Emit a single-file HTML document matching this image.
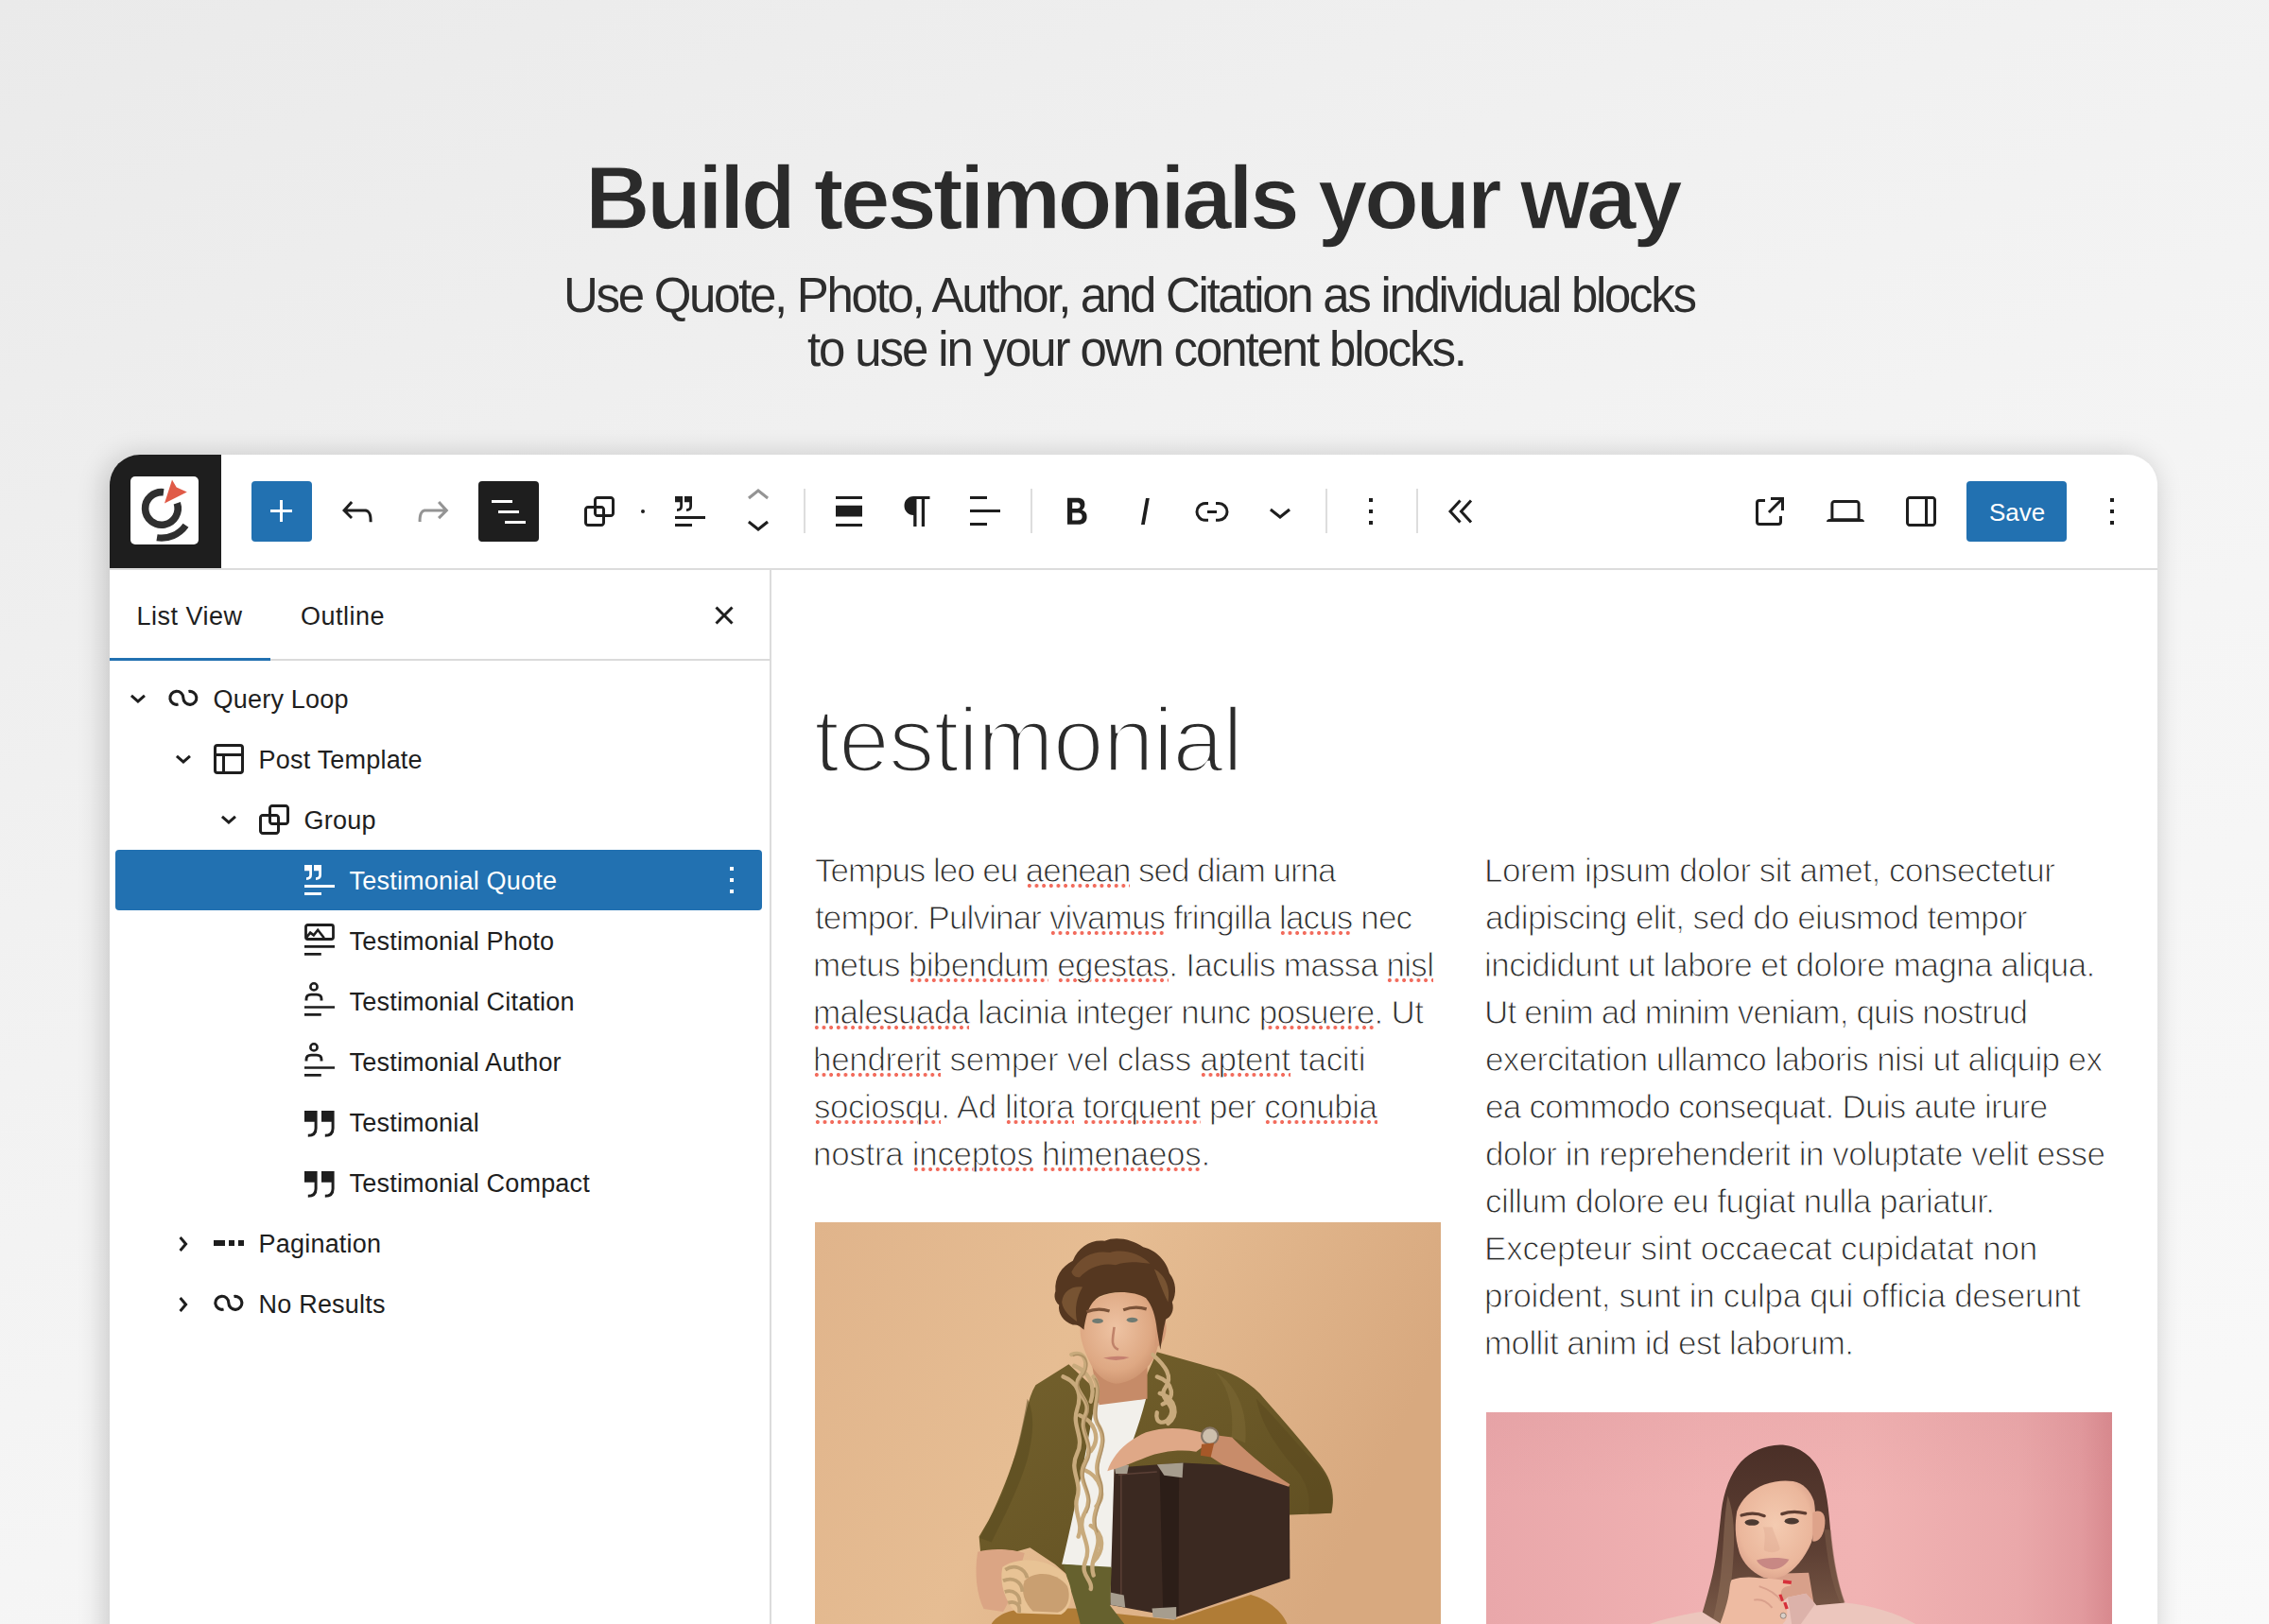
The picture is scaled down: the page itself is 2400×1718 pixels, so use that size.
<!DOCTYPE html><html><head><meta charset="utf-8"><style>
*{margin:0;padding:0;box-sizing:border-box}
html,body{width:2400px;height:1718px;overflow:hidden}
body{position:relative;font-family:"Liberation Sans",sans-serif;background:linear-gradient(156deg,#eaeaea 0%,#f1f1f1 35%,#f5f5f5 60%,#f9f9f9 100%);color:#2d2d2d}
.t{position:absolute;white-space:nowrap}
.r{position:absolute}
.ic{position:absolute;overflow:visible}
#card{position:absolute;left:116px;top:481px;width:2166px;height:1400px;background:#fff;border-radius:32px 32px 0 0;box-shadow:-4px 3px 30px rgba(0,0,0,.2)}
.sp{background-image:radial-gradient(circle at 3.8px 50%,#f26b5c 1.7px,rgba(242,107,92,0) 2.3px);background-repeat:repeat-x;background-size:7.67px 6px;background-position:0 100%;padding-bottom:0px}
svg#ov{position:absolute;left:0;top:0;width:2400px;height:1718px;overflow:visible}
</style></head><body>
<div class="t" style="left:619.00px;top:162.07px;font-size:95px;line-height:95px;color:#2b2b2b;font-weight:bold;letter-spacing:-3.673px;-webkit-text-stroke:1.4px #efefef;">Build testimonials your way</div>
<div class="t" style="left:596.00px;top:286.82px;font-size:51px;line-height:51px;color:#2d2d2d;letter-spacing:-2.302px;">Use Quote, Photo, Author, and Citation as individual blocks</div>
<div class="t" style="left:854.00px;top:343.82px;font-size:51px;line-height:51px;color:#2d2d2d;letter-spacing:-2.129px;">to use in your own content blocks.</div>
<div id="card"></div>
<div class="r" style="left:116px;top:481px;width:118px;height:120px;background:#1e1e1e;border-top-left-radius:32px"></div>
<div class="r" style="left:138px;top:504px;width:72px;height:72px;background:#fff;border-radius:5px"></div>
<svg class="ic" style="left:138px;top:504px;width:72px;height:72px" viewBox="0 0 72 72">
<path d="M49.26 28.27 A17.3 17.3 0 1 1 35.01 16.73" fill="none" stroke="#2f2f2f" stroke-width="7.6"/>
<path d="M58.5 51.8 A31.3 31.3 0 0 1 28 64.8" fill="none" stroke="#2f2f2f" stroke-width="7.2"/>
<path d="M44 3.6 L48.7 11.5 L59.8 16.5 L36 28.5 Z" fill="#e05a47"/>
</svg>
<div class="r" style="left:116px;top:601px;width:2166px;height:2px;background:#dcdcdc;"></div>
<div class="r" style="left:266px;top:509px;width:64px;height:64px;background:#2271b1;border-radius:4px"></div>
<svg class="ic" style="left:274.0px;top:517.0px;width:48px;height:48px" viewBox="0 0 24 24"><path fill="#fff" d="M11 12.5V17.5H12.5V12.5H17.5V11H12.5V6H11V11H6V12.5H11Z"/></svg>
<svg class="ic" style="left:354.0px;top:517.0px;width:48px;height:48px" viewBox="0 0 24 24"><path fill="#1e1e1e" d="M18.3 11.7c-.6-.6-1.4-.9-2.3-.9H6.7l2.9-3.3-1.1-1-4.5 5L8.5 16l1-1-2.7-2.7H16c.5 0 .9.2 1.3.5 1 1 1 3.4 1 4.5v.3h1.5v-.2c0-1.5 0-4.3-1.5-5.7z"/></svg>
<svg class="ic" style="left:434.0px;top:517.0px;width:48px;height:48px" viewBox="0 0 24 24"><path fill="#949494" d="M15.6 6.5l-1.1 1 2.9 3.3H8c-.9 0-1.7.3-2.3.9-1.4 1.5-1.4 4.2-1.4 5.6v.2h1.5v-.3c0-1.1 0-3.5 1-4.5.3-.3.7-.5 1.3-.5h9.2L14.5 15l1.1 1.1 4.6-4.6-4.6-5z"/></svg>
<div class="r" style="left:506px;top:509px;width:64px;height:64px;background:#1e1e1e;border-radius:4px"></div>
<svg class="ic" style="left:514.0px;top:517.0px;width:48px;height:48px" viewBox="0 0 24 24"><path fill="#fff" d="M3 6h11v1.5H3V6Zm3.5 5.5h11V13h-11v-1.5ZM21 17H10v1.5h11V17Z"/></svg>
<svg class="ic" style="left:610.0px;top:517.0px;width:48px;height:48px" viewBox="0 0 24 24"><path fill="#1e1e1e" d="M18 4h-7c-1.1 0-2 .9-2 2v3H6c-1.1 0-2 .9-2 2v7c0 1.1.9 2 2 2h7c1.1 0 2-.9 2-2v-3h3c1.1 0 2-.9 2-2V6c0-1.1-.9-2-2-2zm-4.5 14c0 .3-.2.5-.5.5H6c-.3 0-.5-.2-.5-.5v-7c0-.3.2-.5.5-.5h3V13c0 1.1.9 2 2 2h2.5v3zm0-4.5H11c-.3 0-.5-.2-.5-.5v-2.5H13c.3 0 .5.2.5.5v2.5zm5-.5c0 .3-.2.5-.5.5h-3V11c0-1.1-.9-2-2-2h-2.5V6c0-.3.2-.5.5-.5h7c.3 0 .5.2.5.5v7z"/></svg>
<div class="r" style="left:678px;top:539px;width:4px;height:4px;background:#1e1e1e;border-radius:2px"></div>
<svg class="ic" style="left:706.0px;top:517.0px;width:48px;height:48px" viewBox="0 0 24 24"><path fill="#1e1e1e" d="M4 4H8V9.3Q8 12 5 12V10.6Q6.6 10.6 6.6 9.3V7.1H4ZM9 4H13V9.3Q13 12 10 12V10.6Q11.6 10.6 11.6 9.3V7.1H9ZM4 14.5h16V16H4zM4 18.5h9V20H4z"/></svg>
<svg class="ic" style="left:778.0px;top:501.0px;width:48px;height:48px" viewBox="0 0 24 24"><path fill="#949494" d="M6.5 12.4L12 8l5.5 4.4-.9 1.2L12 10l-4.5 3.6-1-1.2z"/></svg>
<svg class="ic" style="left:778.0px;top:530.0px;width:48px;height:48px" viewBox="0 0 24 24"><path fill="#1e1e1e" d="M17.5 11.6L12 16l-5.5-4.4.9-1.2L12 14l4.5-3.6 1 1.2z"/></svg>
<div class="r" style="left:850px;top:517px;width:2px;height:47px;background:#dddddd;"></div>
<div class="r" style="left:1090px;top:517px;width:2px;height:47px;background:#dddddd;"></div>
<div class="r" style="left:1402px;top:517px;width:2px;height:47px;background:#dddddd;"></div>
<div class="r" style="left:1498px;top:517px;width:2px;height:47px;background:#dddddd;"></div>
<svg class="ic" style="left:874.0px;top:517.0px;width:48px;height:48px" viewBox="0 0 24 24"><path fill="#1e1e1e" d="M5 4h14v1.5H5zM5 8.85h14v5.95H5zM5 18.5h14V20H5z"/></svg>
<svg class="ic" style="left:945.5px;top:517.0px;width:48px;height:48px" viewBox="0 0 24 24"><path fill="#1e1e1e" d="M10.1 4H18.75V5.5H16.05V20H14.4V5.5H11.75V20H10.1V14C7.3 14 5.25 11.8 5.25 9C5.25 6.2 7.3 4 10.1 4Z"/></svg>
<svg class="ic" style="left:1018.0px;top:517.0px;width:48px;height:48px" viewBox="0 0 24 24"><path fill="#1e1e1e" d="M13 5.5H4V4h9v1.5Zm7 7H4V11h16v1.5Zm-7 7H4V18h9v1.5Z"/></svg>
<svg class="ic" style="left:1114.5px;top:517.0px;width:48px;height:48px" viewBox="0 0 24 24"><path fill="#1e1e1e" d="M14.7 11.3c1-.6 1.5-1.6 1.5-3 0-2.3-1.3-3.4-4-3.4H7v14h5.8c1.4 0 2.5-.3 3.3-1 .8-.7 1.2-1.7 1.2-2.9.1-1.9-.8-3.1-2.6-3.7zm-5.1-4h2.3c.6 0 1.1.1 1.4.4.3.3.5.7.5 1.2s-.2 1-.5 1.2c-.3.3-.8.4-1.4.4H9.6V7.3zm4.6 9c-.4.3-1 .4-1.7.4H9.6v-3.9h2.9c.7 0 1.3.2 1.7.5.4.3.6.8.6 1.5s-.2 1.2-.6 1.5z"/></svg>
<svg class="ic" style="left:1186.5px;top:517.0px;width:48px;height:48px" viewBox="0 0 24 24"><path fill="#1e1e1e" d="M12.5 5L10 19h1.9l2.5-14z"/></svg>
<svg class="ic" style="left:1257.5px;top:517.0px;width:48px;height:48px" viewBox="0 0 24 24"><path fill="#1e1e1e" d="M10 17.389H8.444A5.194 5.194 0 1 1 8.444 7H10v1.5H8.444a3.694 3.694 0 0 0 0 7.389H10v1.5ZM14 7h1.556a5.194 5.194 0 0 1 0 10.39H14v-1.5h1.556a3.694 3.694 0 0 0 0-7.39H14V7Zm-4.5 6h5v-1.5h-5V13Z"/></svg>
<svg class="ic" style="left:1330.0px;top:517.0px;width:48px;height:48px" viewBox="0 0 24 24"><path fill="#1e1e1e" d="M17.5 11.6L12 16l-5.5-4.4.9-1.2L12 14l4.5-3.6 1 1.2z"/></svg>
<svg class="ic" style="left:1426.0px;top:517.0px;width:48px;height:48px" viewBox="0 0 24 24"><path fill="#1e1e1e" d="M13 19h-2v-2h2v2zm0-6h-2v-2h2v2zm0-6h-2V5h2v2z"/></svg>
<svg class="ic" style="left:1848.0px;top:517.0px;width:48px;height:48px" viewBox="0 0 24 24"><path fill="#1e1e1e" d="M19.5 4.5h-7V6h4.44l-5.97 5.97 1.06 1.06L18 7.06v4.44h1.5v-7Zm-13 1a2 2 0 0 0-2 2v10a2 2 0 0 0 2 2h10a2 2 0 0 0 2-2v-3H17v3a.5.5 0 0 1-.5.5h-10a.5.5 0 0 1-.5-.5v-10a.5.5 0 0 1 .5-.5h3V5.5h-3Z"/></svg>
<svg class="ic" style="left:1928.0px;top:517.0px;width:48px;height:48px" viewBox="0 0 24 24"><path fill="#1e1e1e" d="M20.5 16h-.7V8c0-1.1-.9-2-2-2H6.2c-1.1 0-2 .9-2 2v8h-.7c-.8 0-1.5.7-1.5 1.5h20c0-.8-.7-1.5-1.5-1.5zM5.7 8c0-.3.2-.5.5-.5h11.6c.3 0 .5.2.5.5v7.6H5.7V8z"/></svg>
<svg class="ic" style="left:2008.0px;top:517.0px;width:48px;height:48px" viewBox="0 0 24 24"><path fill="#1e1e1e" d="M18 4H6c-1.1 0-2 .9-2 2v12c0 1.1.9 2 2 2h12c1.1 0 2-.9 2-2V6c0-1.1-.9-2-2-2zm-4 14.5H6c-.3 0-.5-.2-.5-.5V6c0-.3.2-.5.5-.5h8v13zm4.5-.5c0 .3-.2.5-.5.5h-2.5v-13H18c.3 0 .5.2.5.5v12z"/></svg>
<div class="r" style="left:2080px;top:509px;width:106px;height:64px;background:#2271b1;border-radius:4px"></div>
<div class="t" style="left:2104.00px;top:528.99px;font-size:26px;line-height:26px;color:#fff;letter-spacing:0.000px;">Save</div>
<svg class="ic" style="left:2210.0px;top:517.0px;width:48px;height:48px" viewBox="0 0 24 24"><path fill="#1e1e1e" d="M13 19h-2v-2h2v2zm0-6h-2v-2h2v2zm0-6h-2V5h2v2z"/></svg>
<div class="r" style="left:814px;top:603px;width:2px;height:1200px;background:#dcdcdc;"></div>
<div class="t" style="left:144.50px;top:639.14px;font-size:27px;line-height:27px;color:#1e1e1e;letter-spacing:0.500px;">List View</div>
<div class="t" style="left:318.00px;top:639.14px;font-size:27px;line-height:27px;color:#1e1e1e;letter-spacing:0.500px;">Outline</div>
<svg class="ic" style="left:742.0px;top:626.5px;width:48px;height:48px" viewBox="0 0 24 24"><path fill="#1e1e1e" d="M12 13.06l3.712 3.713 1.061-1.06L13.061 12l3.712-3.712-1.06-1.06L12 10.938 8.288 7.227l-1.061 1.06L10.939 12l-3.712 3.712 1.06 1.061L12 13.061z"/></svg>
<div class="r" style="left:116px;top:697px;width:699px;height:2px;background:#dadada;"></div>
<div class="r" style="left:116px;top:696px;width:170px;height:3px;background:#2271b1;"></div>
<div class="r" style="left:122px;top:899px;width:684px;height:64px;background:#2271b1;border-radius:4px"></div>
<svg class="ic" style="left:122.0px;top:717.0px;width:48px;height:48px" viewBox="0 0 24 24"><path fill="#1e1e1e" d="M15.9599 10.0375L11.9719 13.4558L7.98383 10.0375L8.96003 8.89856L11.9719 11.4802L14.9838 8.89856L15.9599 10.0375Z"/></svg>
<div class="t" style="left:225.60px;top:727.14px;font-size:27px;line-height:27px;color:#1e1e1e;letter-spacing:0.200px;">Query Loop</div>
<svg class="ic" style="left:170.0px;top:781.0px;width:48px;height:48px" viewBox="0 0 24 24"><path fill="#1e1e1e" d="M15.9599 10.0375L11.9719 13.4558L7.98383 10.0375L8.96003 8.89856L11.9719 11.4802L14.9838 8.89856L15.9599 10.0375Z"/></svg>
<svg class="ic" style="left:218.0px;top:779.0px;width:48px;height:48px" viewBox="0 0 24 24"><path fill="#1e1e1e" d="M18 5.5H6a.5.5 0 0 0-.5.5v3h13V6a.5.5 0 0 0-.5-.5Zm.5 5H10v8h8a.5.5 0 0 0 .5-.5v-7.5Zm-10 0h-3V18a.5.5 0 0 0 .5.5h2.5v-8ZM6 4h12a2 2 0 0 1 2 2v12a2 2 0 0 1-2 2H6a2 2 0 0 1-2-2V6a2 2 0 0 1 2-2Z"/></svg>
<div class="t" style="left:273.60px;top:791.14px;font-size:27px;line-height:27px;color:#1e1e1e;letter-spacing:0.200px;">Post Template</div>
<svg class="ic" style="left:218.0px;top:845.0px;width:48px;height:48px" viewBox="0 0 24 24"><path fill="#1e1e1e" d="M15.9599 10.0375L11.9719 13.4558L7.98383 10.0375L8.96003 8.89856L11.9719 11.4802L14.9838 8.89856L15.9599 10.0375Z"/></svg>
<svg class="ic" style="left:266.0px;top:843.0px;width:48px;height:48px" viewBox="0 0 24 24"><path fill="#1e1e1e" d="M18 4h-7c-1.1 0-2 .9-2 2v3H6c-1.1 0-2 .9-2 2v7c0 1.1.9 2 2 2h7c1.1 0 2-.9 2-2v-3h3c1.1 0 2-.9 2-2V6c0-1.1-.9-2-2-2zm-4.5 14c0 .3-.2.5-.5.5H6c-.3 0-.5-.2-.5-.5v-7c0-.3.2-.5.5-.5h3V13c0 1.1.9 2 2 2h2.5v3zm0-4.5H11c-.3 0-.5-.2-.5-.5v-2.5H13c.3 0 .5.2.5.5v2.5zm5-.5c0 .3-.2.5-.5.5h-3V11c0-1.1-.9-2-2-2h-2.5V6c0-.3.2-.5.5-.5h7c.3 0 .5.2.5.5v7z"/></svg>
<div class="t" style="left:321.60px;top:855.14px;font-size:27px;line-height:27px;color:#1e1e1e;letter-spacing:0.200px;">Group</div>
<svg class="ic" style="left:314.0px;top:907.0px;width:48px;height:48px" viewBox="0 0 24 24"><path fill="#fff" d="M4 4H8V9.3Q8 12 5 12V10.6Q6.6 10.6 6.6 9.3V7.1H4ZM9 4H13V9.3Q13 12 10 12V10.6Q11.6 10.6 11.6 9.3V7.1H9ZM4 14.5h16V16H4zM4 18.5h9V20H4z"/></svg>
<div class="t" style="left:369.60px;top:919.14px;font-size:27px;line-height:27px;color:#fff;letter-spacing:0.200px;">Testimonial Quote</div>
<div class="t" style="left:369.60px;top:983.14px;font-size:27px;line-height:27px;color:#1e1e1e;letter-spacing:0.200px;">Testimonial Photo</div>
<div class="t" style="left:369.60px;top:1047.14px;font-size:27px;line-height:27px;color:#1e1e1e;letter-spacing:0.200px;">Testimonial Citation</div>
<div class="t" style="left:369.60px;top:1111.14px;font-size:27px;line-height:27px;color:#1e1e1e;letter-spacing:0.200px;">Testimonial Author</div>
<svg class="ic" style="left:314.0px;top:1163.0px;width:48px;height:48px" viewBox="0 0 24 24"><path fill="#1e1e1e" d="M4 6H10.8V15.2Q10.8 19.9 5.9 19.9V18.4Q9.3 18.4 9.3 15.2V11.9H4ZM13 6H19.8V15.2Q19.8 19.9 14.9 19.9V18.4Q18.3 18.4 18.3 15.2V11.9H13Z"/></svg>
<div class="t" style="left:369.60px;top:1175.14px;font-size:27px;line-height:27px;color:#1e1e1e;letter-spacing:0.200px;">Testimonial</div>
<svg class="ic" style="left:314.0px;top:1227.0px;width:48px;height:48px" viewBox="0 0 24 24"><path fill="#1e1e1e" d="M4 6H10.8V15.2Q10.8 19.9 5.9 19.9V18.4Q9.3 18.4 9.3 15.2V11.9H4ZM13 6H19.8V15.2Q19.8 19.9 14.9 19.9V18.4Q18.3 18.4 18.3 15.2V11.9H13Z"/></svg>
<div class="t" style="left:369.60px;top:1239.14px;font-size:27px;line-height:27px;color:#1e1e1e;letter-spacing:0.200px;">Testimonial Compact</div>
<svg class="ic" style="left:170.0px;top:1291.5px;width:48px;height:48px" viewBox="0 0 24 24"><path fill="#1e1e1e" d="M10.8622 8.04053L14.2805 12.0286L10.8622 16.0167L9.72327 15.0405L12.3049 12.0286L9.72327 9.01672L10.8622 8.04053Z"/></svg>
<div class="r" style="left:226px;top:1312px;width:12px;height:6px;background:#1e1e1e;"></div>
<div class="r" style="left:242px;top:1312px;width:6px;height:6px;background:#1e1e1e;"></div>
<div class="r" style="left:252px;top:1312px;width:6px;height:6px;background:#1e1e1e;"></div>
<div class="t" style="left:273.60px;top:1303.14px;font-size:27px;line-height:27px;color:#1e1e1e;letter-spacing:0.200px;">Pagination</div>
<svg class="ic" style="left:170.0px;top:1355.5px;width:48px;height:48px" viewBox="0 0 24 24"><path fill="#1e1e1e" d="M10.8622 8.04053L14.2805 12.0286L10.8622 16.0167L9.72327 15.0405L12.3049 12.0286L9.72327 9.01672L10.8622 8.04053Z"/></svg>
<div class="t" style="left:273.60px;top:1367.14px;font-size:27px;line-height:27px;color:#1e1e1e;letter-spacing:0.200px;">No Results</div>
<svg class="ic" style="left:750.0px;top:907.0px;width:48px;height:48px" viewBox="0 0 24 24"><path fill="#fff" d="M13 19h-2v-2h2v2zm0-6h-2v-2h2v2zm0-6h-2V5h2v2z"/></svg>
<div class="t" style="left:861.00px;top:733.87px;font-size:97px;line-height:97px;color:#2b2b2b;letter-spacing:-0.975px;-webkit-text-stroke:3.5px #fff;">testimonial</div>
<div class="t" style="left:862.00px;top:903.37px;font-size:35px;line-height:35px;color:#2a2a2a;letter-spacing:-1.038px;-webkit-text-stroke:1px #fff;">Tempus leo eu <span class="sp">aenean</span> sed diam urna</div>
<div class="t" style="left:862.00px;top:953.37px;font-size:35px;line-height:35px;color:#2a2a2a;letter-spacing:-0.864px;-webkit-text-stroke:1px #fff;">tempor. Pulvinar <span class="sp">vivamus</span> fringilla <span class="sp">lacus</span> nec</div>
<div class="t" style="left:860.00px;top:1003.37px;font-size:35px;line-height:35px;color:#2a2a2a;letter-spacing:-0.679px;-webkit-text-stroke:1px #fff;">metus <span class="sp">bibendum</span> <span class="sp">egestas</span>. Iaculis massa <span class="sp">nisl</span></div>
<div class="t" style="left:860.00px;top:1053.37px;font-size:35px;line-height:35px;color:#2a2a2a;letter-spacing:-0.665px;-webkit-text-stroke:1px #fff;"><span class="sp">malesuada</span> lacinia integer nunc <span class="sp">posuere</span>. Ut</div>
<div class="t" style="left:860.00px;top:1103.37px;font-size:35px;line-height:35px;color:#2a2a2a;letter-spacing:-0.329px;-webkit-text-stroke:1px #fff;"><span class="sp">hendrerit</span> semper vel class <span class="sp">aptent</span> taciti</div>
<div class="t" style="left:861.00px;top:1153.37px;font-size:35px;line-height:35px;color:#2a2a2a;letter-spacing:-0.483px;-webkit-text-stroke:1px #fff;"><span class="sp">sociosqu</span>. Ad <span class="sp">litora</span> <span class="sp">torquent</span> per <span class="sp">conubia</span></div>
<div class="t" style="left:860.00px;top:1203.37px;font-size:35px;line-height:35px;color:#2a2a2a;letter-spacing:-0.316px;-webkit-text-stroke:1px #fff;">nostra <span class="sp">inceptos</span> <span class="sp">himenaeos</span>.</div>
<div class="t" style="left:1570.00px;top:903.37px;font-size:35px;line-height:35px;color:#2a2a2a;letter-spacing:-0.487px;-webkit-text-stroke:1px #fff;">Lorem ipsum dolor sit amet, consectetur</div>
<div class="t" style="left:1571.00px;top:953.37px;font-size:35px;line-height:35px;color:#2a2a2a;letter-spacing:-0.591px;-webkit-text-stroke:1px #fff;">adipiscing elit, sed do eiusmod tempor</div>
<div class="t" style="left:1570.00px;top:1003.37px;font-size:35px;line-height:35px;color:#2a2a2a;letter-spacing:-0.536px;-webkit-text-stroke:1px #fff;">incididunt ut labore et dolore magna aliqua.</div>
<div class="t" style="left:1570.00px;top:1053.37px;font-size:35px;line-height:35px;color:#2a2a2a;letter-spacing:-0.833px;-webkit-text-stroke:1px #fff;">Ut enim ad minim veniam, quis nostrud</div>
<div class="t" style="left:1571.00px;top:1103.37px;font-size:35px;line-height:35px;color:#2a2a2a;letter-spacing:-0.609px;-webkit-text-stroke:1px #fff;">exercitation ullamco laboris nisi ut aliquip ex</div>
<div class="t" style="left:1571.00px;top:1153.37px;font-size:35px;line-height:35px;color:#2a2a2a;letter-spacing:-0.708px;-webkit-text-stroke:1px #fff;">ea commodo consequat. Duis aute irure</div>
<div class="t" style="left:1571.00px;top:1203.37px;font-size:35px;line-height:35px;color:#2a2a2a;letter-spacing:-0.467px;-webkit-text-stroke:1px #fff;">dolor in reprehenderit in voluptate velit esse</div>
<div class="t" style="left:1571.00px;top:1253.37px;font-size:35px;line-height:35px;color:#2a2a2a;letter-spacing:-0.559px;-webkit-text-stroke:1px #fff;">cillum dolore eu fugiat nulla pariatur.</div>
<div class="t" style="left:1570.00px;top:1303.37px;font-size:35px;line-height:35px;color:#2a2a2a;letter-spacing:-0.175px;-webkit-text-stroke:1px #fff;">Excepteur sint occaecat cupidatat non</div>
<div class="t" style="left:1570.00px;top:1353.37px;font-size:35px;line-height:35px;color:#2a2a2a;letter-spacing:-0.331px;-webkit-text-stroke:1px #fff;">proident, sunt in culpa qui officia deserunt</div>
<div class="t" style="left:1570.00px;top:1403.37px;font-size:35px;line-height:35px;color:#2a2a2a;letter-spacing:-0.596px;-webkit-text-stroke:1px #fff;">mollit anim id est laborum.</div>
<svg class="r" style="left:862px;top:1293px;width:662px;height:425px" viewBox="862 1293 662 425">
<defs>
<linearGradient id="mbg" x1="0" y1="0" x2="1" y2=".3"><stop offset="0" stop-color="#e0b48b"/><stop offset=".45" stop-color="#e6bd93"/><stop offset="1" stop-color="#d8a97f"/></linearGradient>
<radialGradient id="mface" cx=".45" cy=".4" r=".65"><stop offset="0" stop-color="#eec3a3"/><stop offset=".7" stop-color="#dea883"/><stop offset="1" stop-color="#c98f6b"/></radialGradient>
<linearGradient id="mjack" x1="0" y1="0" x2="1" y2="1"><stop offset="0" stop-color="#74612d"/><stop offset=".5" stop-color="#6a5827"/><stop offset="1" stop-color="#5d4c20"/></linearGradient>
</defs>
<rect x="862" y="1293" width="662" height="425" fill="url(#mbg)"/>
<g transform="translate(862,1293) scale(0.29176)">
<path fill="url(#mjack)" d="M920,515 L800,590 C770,640 760,720 740,800 C710,900 670,1000 630,1080 L595,1140 L600,1195 L710,1200 L780,1180 L870,1240 L940,1300 L1080,1300 L1080,890 L1700,1062 L1872,1055 C1888,990 1872,930 1832,880 C1762,790 1682,700 1612,620 C1562,570 1502,540 1452,530 L1240,470 L1200,560 L1010,600 Z"/>
<path fill="#5a4a1f" opacity=".55" d="M770,640 C750,760 720,880 680,980 C650,1050 620,1100 598,1145 L640,1160 C690,1060 740,960 770,860 C790,780 800,700 770,640Z"/>
<path fill="#5a481e" opacity=".5" d="M1600,640 C1680,720 1760,820 1830,890 C1870,940 1880,1000 1872,1055 L1790,1058 C1800,990 1780,930 1730,880 C1680,820 1620,740 1600,640Z"/>
<path fill="#7d6a36" opacity=".5" d="M1450,540 C1500,600 1520,680 1510,780 L1560,800 C1570,700 1540,600 1450,540Z"/>
<path fill="#f2f0eb" d="M1015,655 L1200,640 C1180,720 1150,800 1120,880 L1085,890 L1080,1255 L895,1240 C930,1100 970,900 1015,655 Z"/>
<path fill="#c68b68" d="M1005,520 L1205,520 L1205,640 L1030,662 Z"/>
<path fill="url(#mface)" d="M962,372 C968,320 990,285 1060,262 C1130,245 1190,250 1215,290 C1238,330 1248,380 1246,420 C1244,470 1225,510 1190,540 C1160,570 1120,585 1090,585 C1050,580 1015,550 995,505 C975,460 958,420 962,372 Z"/>
<path fill="#d49b78" d="M1238,350 C1262,335 1280,360 1272,400 C1265,440 1245,455 1232,450 Z"/>
<path fill="#553720" d="M872,250 C868,200 895,160 935,140 C955,90 1000,62 1050,68 C1090,50 1150,62 1190,90 C1235,100 1275,140 1285,185 C1310,215 1312,260 1295,290 C1305,320 1290,345 1272,352 C1262,390 1258,430 1252,462 L1240,390 C1235,340 1222,300 1200,275 C1160,250 1080,245 1030,270 C1000,290 985,320 975,390 C960,375 950,370 935,372 C900,360 880,330 885,300 C868,285 866,265 872,250 Z"/>
<path fill="#7c5533" opacity=".75" d="M930,180 C960,120 1020,100 1070,110 C1120,95 1180,115 1215,150 C1170,145 1130,140 1090,155 C1040,145 990,165 960,200 C945,200 935,195 930,180Z"/>
<path fill="#86603a" opacity=".7" d="M895,290 C900,250 930,230 970,235 C950,270 940,310 950,360 C920,340 900,320 895,290Z M1230,170 C1270,190 1290,240 1280,290 C1265,260 1250,220 1230,170Z"/>
<path fill="none" stroke="#7a5238" stroke-width="11" d="M985,325 Q1025,308 1068,322 M1118,318 Q1160,302 1202,315"/>
<ellipse cx="1025" cy="358" rx="20" ry="9" fill="#6f7a72"/><ellipse cx="1150" cy="354" rx="20" ry="9" fill="#6f7a72"/>
<path fill="none" stroke="#c0836a" stroke-width="9" d="M1085,380 C1080,420 1070,450 1100,462"/>
<path fill="#c58070" d="M1045,492 Q1095,480 1140,490 Q1095,510 1045,492Z"/>
<path fill="#c88c6a" d="M1440,770 L1512,780 C1562,830 1642,900 1722,950 L1712,968 C1622,952 1542,922 1482,882 L1422,842 Z"/>
<path fill="#3b2921" d="M1085,890 L1330,872 L1480,880 L1720,960 L1722,1292 L1310,1432 L1070,1387 Z"/>
<path fill="#2c1e18" d="M1250,900 L1320,892 L1318,1425 L1262,1412 Z"/>
<path fill="none" stroke="#5b4036" stroke-width="5" d="M1110,905 L1110,1370 M1100,915 L1240,905"/>
<path fill="#a69d8e" d="M1240,878 L1335,872 L1332,926 L1266,918 Z"/>
<path fill="#a69d8e" d="M1085,882 L1138,880 L1132,912 L1090,912 Z"/>
<path fill="#a69d8e" d="M1070,1342 L1120,1352 L1125,1397 L1072,1387 Z"/>
<path fill="#a69d8e" d="M1222,1400 L1310,1395 L1310,1440 L1226,1432 Z"/>
<path fill="#dfa887" d="M1060,902 C1080,842 1130,792 1200,762 C1260,742 1330,742 1400,762 L1422,802 L1382,832 C1322,822 1252,832 1202,852 C1152,872 1102,892 1060,902 Z"/>
<circle cx="1432" cy="775" r="30" fill="#cdbfac" stroke="#857565" stroke-width="7"/>
<path fill="#a65828" d="M1402,805 L1447,800 L1435,852 L1398,846 Z"/>
<path fill="#b07c36" d="M640,1457 C660,1420 720,1400 780,1400 L940,1400 L1100,1420 L1300,1442 L1580,1350 C1650,1370 1700,1420 1712,1457 Z"/>
<path fill="#66612e" d="M900,1240 L1075,1250 L1070,1390 L1122,1457 L962,1457 C950,1400 922,1320 900,1240 Z"/>
<path fill="#dba584" d="M590,1195 C640,1180 720,1185 760,1200 L742,1262 C722,1332 702,1382 682,1412 L612,1402 C587,1352 577,1272 590,1195 Z"/>
<path fill="#e8c395" d="M680,1250 C740,1210 840,1220 900,1270 C942,1320 937,1400 892,1422 L732,1417 C692,1382 667,1312 680,1250 Z"/>
<path fill="#c99f71" d="M760,1300 C800,1260 880,1270 915,1320 C930,1360 915,1405 880,1415 L790,1410 C760,1380 745,1340 760,1300Z"/>
<g fill="none" stroke="#bf9f72" stroke-width="13"><path d="M690,1260 C720,1240 760,1250 770,1290 M682,1300 C715,1285 750,1300 752,1340 M688,1340 C720,1330 745,1350 742,1385 M700,1380 C730,1370 745,1390 740,1415"/></g>
<g fill="none" stroke="#c8aa7c" stroke-width="15" stroke-linecap="round">
<path d="M930,480 C980,460 1000,520 960,560 C920,610 1010,640 980,700 C950,760 1020,800 980,870 C940,940 1020,980 980,1050 C940,1120 1010,1160 980,1230 C960,1280 1010,1300 1000,1330"/>
<path d="M1010,560 C1050,620 990,680 1030,740 C1070,810 1000,860 1030,930 C1060,1000 990,1050 1020,1120 C1045,1180 990,1220 1010,1280"/>
<path d="M900,560 C950,580 970,620 950,680 C930,740 980,780 950,840 C920,900 970,940 950,1000 C935,1050 975,1090 955,1140"/>
<path d="M940,520 C990,540 1020,590 1000,650 M960,700 C1010,720 1040,780 1000,830 M980,900 C1030,920 1060,990 1020,1030 M1000,1100 C1050,1130 1050,1190 1010,1230"/>
<path d="M1225,480 C1270,520 1300,560 1270,600 C1240,640 1310,660 1290,700 C1270,740 1230,730 1240,690 M1240,560 C1300,580 1310,640 1260,660 M1250,620 C1310,640 1320,700 1280,730"/>
</g>
<g fill="none" stroke="#a3855a" stroke-width="5" opacity=".7">
<path d="M935,485 C985,465 1005,525 965,565 C925,615 1015,645 985,705 C955,765 1025,805 985,875 C945,945 1025,985 985,1055"/>
<path d="M1015,565 C1055,625 995,685 1035,745 C1075,815 1005,865 1035,935 C1065,1005 995,1055 1025,1125"/>
</g>
</g>
</svg>
<svg class="r" style="left:1572px;top:1494px;width:662px;height:224px" viewBox="1572 1494 662 224">
<defs>
<linearGradient id="wbg" x1="0" y1="0" x2="1" y2="0"><stop offset="0" stop-color="#e9a7aa"/><stop offset=".35" stop-color="#f0b1b2"/><stop offset=".6" stop-color="#f1b3b3"/><stop offset=".85" stop-color="#eaa8aa"/><stop offset=".95" stop-color="#e29a9e"/><stop offset="1" stop-color="#d8898e"/></linearGradient>
<linearGradient id="wtop" x1="0" y1="0" x2="0" y2="1"><stop offset="0" stop-color="#c87a80" stop-opacity=".10"/><stop offset=".4" stop-color="#c87a80" stop-opacity="0"/></linearGradient>
<radialGradient id="wface" cx=".5" cy=".45" r=".6"><stop offset="0" stop-color="#f4cbb1"/><stop offset=".75" stop-color="#ebb79c"/><stop offset="1" stop-color="#d9a08a"/></radialGradient>
<linearGradient id="whair" x1="0" y1="0" x2="0" y2="1"><stop offset="0" stop-color="#4a2f27"/><stop offset=".6" stop-color="#5e4034"/><stop offset="1" stop-color="#7a5a48"/></linearGradient>
</defs>
<rect x="1572" y="1494" width="662" height="224" fill="url(#wbg)"/>
<rect x="1572" y="1494" width="662" height="224" fill="url(#wtop)"/>
<g transform="translate(1800,1494) scale(0.13793)">
<path fill="url(#whair)" d="M600,250 C480,255 380,300 300,380 C220,470 170,600 150,760 C130,950 110,1150 70,1300 C40,1420 10,1520 -20,1624 L1110,1624 C1110,1560 1100,1500 1090,1450 C1040,1300 1010,1150 990,950 C975,750 960,580 900,440 C840,320 720,250 600,250 Z"/>
<path fill="#8a6a55" opacity=".65" d="M200,640 C170,800 170,1000 150,1200 C140,1350 110,1480 80,1624 L170,1624 C200,1480 230,1320 240,1150 C255,950 250,780 200,640Z"/>
<path fill="#80604c" opacity=".5" d="M940,900 C960,1100 990,1300 1060,1460 L1100,1460 C1040,1300 1010,1100 990,900Z"/>
<path fill="#d8a08a" d="M510,1240 L820,1230 L860,1470 L550,1480 Z"/>
<path fill="url(#wface)" d="M270,760 C255,850 250,950 290,1080 C320,1160 380,1220 460,1262 C510,1285 560,1282 630,1255 C710,1210 790,1120 840,1000 C870,900 880,780 860,680 C830,600 780,545 700,530 C640,522 560,525 480,555 C380,595 300,670 270,760 Z"/>
<path fill="#dea38a" d="M850,770 C900,740 950,760 945,850 C940,940 900,1000 850,990 Z"/>
<path fill="none" stroke="#5e3e32" stroke-width="24" stroke-linecap="round" d="M305,790 Q400,760 480,795 M615,780 Q700,750 795,775"/>
<ellipse cx="385" cy="845" rx="55" ry="24" fill="#4c3a32"/>
<ellipse cx="690" cy="835" rx="55" ry="24" fill="#4c3a32"/>
<path fill="#d9a28c" opacity=".35" d="M470,880 C500,950 470,1030 480,1060 C520,1080 580,1080 600,1050 C590,1000 560,940 540,880Z"/>
<path fill="#c88884" d="M420,1135 C480,1115 600,1110 670,1130 C640,1180 590,1205 540,1205 C490,1200 440,1175 420,1135 Z"/>
<path fill="#ecc6bd" d="M-400,1624 C-250,1575 -80,1540 0,1530 L150,1624 Z M560,1500 L660,1420 L800,1390 L880,1480 L1100,1460 C1300,1480 1500,1540 1640,1624 L480,1624 Z"/>
<path fill="#dcb2aa" d="M660,1420 L800,1390 L870,1470 L760,1624 L690,1624 Z"/>
<path fill="#eebba2" d="M230,1285 C300,1260 380,1262 440,1270 C520,1272 610,1282 690,1300 L680,1330 C620,1335 590,1370 620,1430 C660,1490 665,1560 640,1600 L620,1624 L140,1624 C170,1550 200,1450 210,1380 C215,1330 220,1300 230,1285 Z"/><path fill="none" stroke="#d9a08c" stroke-width="14" d="M440,1335 C520,1360 580,1400 610,1450 M400,1440 C450,1430 500,1450 540,1500"/>
<path fill="#d6303a" d="M625,1285 L690,1295 L685,1320 L622,1312 Z M590,1400 L612,1395 L630,1445 L610,1452 Z M625,1460 L648,1455 L665,1505 L642,1512 Z"/>
<circle cx="625" cy="1560" r="22" fill="#d8cfc8" stroke="#8a7a70" stroke-width="6"/>
</g>
</svg>
<svg id="ov" viewBox="0 0 2400 1718"><path d="M1544.5 529.5L1534 541L1544.5 552.5M1556 529.5L1545.5 541L1556 552.5" fill="none" stroke="#1e1e1e" stroke-width="3"/><path d="M188.55 745.0999999999999 A7 7 0 1 1 193.85 738.3 A7 7 0 1 0 199.45 731.5" fill="none" stroke="#1e1e1e" stroke-width="3.1"/><g transform="translate(314,971) scale(2)"><rect x="4.75" y="3.75" width="14.5" height="7.5" rx="1" fill="none" stroke="#1e1e1e" stroke-width="1.4"/><path d="M5.2 10.2L7.1 7.8L8.9 9.2L11.1 6.4L14.4 10.6" fill="none" stroke="#1e1e1e" stroke-width="1.3"/><path d="M4 14.5h16v1.4H4zM4 18.5h8.9v1.4H4z" fill="#1e1e1e"/></g><g transform="translate(314,1035) scale(2)"><circle cx="9" cy="4.45" r="1.8" fill="none" stroke="#1e1e1e" stroke-width="1.3"/><path d="M5 11.7V10.9Q5 8.55 7.6 8.55H10.4Q13 8.55 13 10.9V11.7" fill="none" stroke="#1e1e1e" stroke-width="1.45"/><path d="M4 14.6h16v1.3H4zM4 18.5h8.9v1.35H4z" fill="#1e1e1e"/></g><g transform="translate(314,1099) scale(2)"><circle cx="9" cy="4.45" r="1.8" fill="none" stroke="#1e1e1e" stroke-width="1.3"/><path d="M5 11.7V10.9Q5 8.55 7.6 8.55H10.4Q13 8.55 13 10.9V11.7" fill="none" stroke="#1e1e1e" stroke-width="1.45"/><path d="M4 14.6h16v1.3H4zM4 18.5h8.9v1.35H4z" fill="#1e1e1e"/></g><path d="M236.55 1385.1 A7 7 0 1 1 241.85 1378.3 A7 7 0 1 0 247.45 1371.5" fill="none" stroke="#1e1e1e" stroke-width="3.1"/></svg>
</body></html>
